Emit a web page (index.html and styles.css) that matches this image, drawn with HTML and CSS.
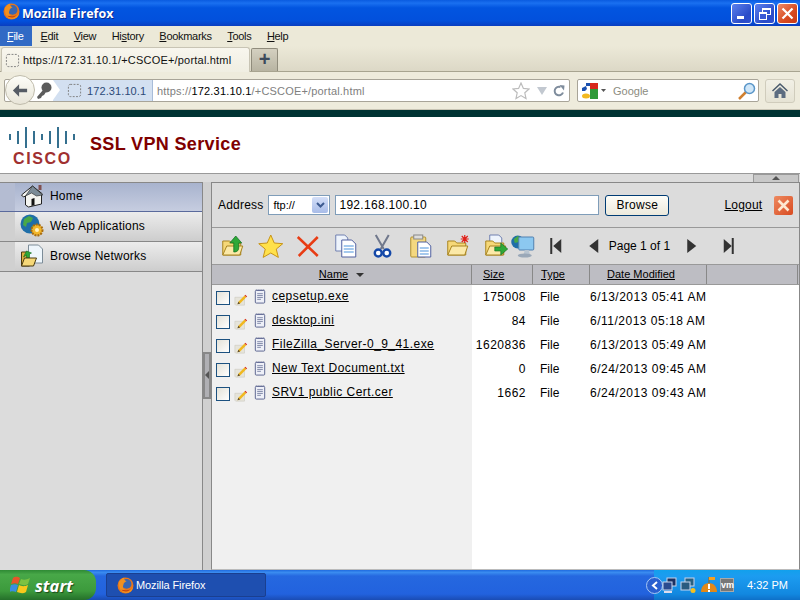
FILE: index.html
```html
<!DOCTYPE html>
<html lang="en">
<head>
    <meta charset="UTF-8">
    <title>Mozilla Firefox</title>
    <link rel="stylesheet" href="styles.css">
</head>
<body>
    <svg class="defs" width="0" height="0">
        <symbol id="fox" viewBox="0 0 16 16">
            <circle cx="8" cy="8" r="7.5" fill="#e8761a"/>
            <circle cx="9" cy="6.5" r="4.6" fill="#3a66b0"/>
            <path d="M2 4c-1 5 1 11 7 11 4 0 6-3 6-6-1 3-3 4-6 3.500-3-.5-4-3-3-5 0-2 2-3 3-3.500C7 3 6 2 7 .5 5 1 3.500 2 3 3.500z" fill="#f09020"/>
            <path d="M4 12c2 2 6 2.500 9-.5-3 1.500-6 1-9 .5z" fill="#c8420c"/>
        </symbol>
        <symbol id="dashed" viewBox="0 0 16 16">
            <rect x="1.500" y="1.500" width="13" height="13" rx="2" fill="none" stroke="#7c7c7c" stroke-dasharray="2 1.500"/>
        </symbol>
        <symbol id="edit" viewBox="0 0 16 16">
            <path d="M1 6h9l2 1v8H2l-1-1z" fill="#e6e4da" stroke="#c8c6bc" stroke-width=".6"/>
            <path d="M5 11l7-7 2 2-7 7-3 1z" fill="#f0b820"/>
            <path d="M12 4l1-1 2 2-1 1z" fill="#d83020"/>
            <path d="M4 14l1-3 2 2z" fill="#5a4a30"/>
        </symbol>
        <symbol id="note" viewBox="0 0 12 16">
            <rect x="1" y="1.500" width="10" height="13.500" rx="1" fill="#eef0f8" stroke="#56608c"/>
            <path d="M1.500 1h9" stroke="#56608c" stroke-dasharray="1 1"/>
            <path d="M3 5h6M3 7h6M3 9h6M3 11h4" stroke="#7c84a4"/>
        </symbol>
        <symbol id="folder" viewBox="0 0 24 24">
            <path d="M2 7h7l2 2h9v12H2z" fill="#f6d878" stroke="#a88420"/>
            <path d="M2 21l4-9h16l-3 9z" fill="#fbe9a8" stroke="#a88420"/>
        </symbol>
    </svg>

    <div class="titlebar">
        <svg class="title-icon"><use href="#fox"/></svg>
        <span class="title-text">Mozilla Firefox</span>
        <div class="win-buttons">
            <div class="win-btn"><span class="min-glyph"></span></div>
            <div class="win-btn"><span class="max-back"></span><span class="max-front"></span></div>
            <div class="win-btn win-close">
                <svg width="13" height="13" viewBox="0 0 13 13"><path d="M1.500 1.500l10 10M11.500 1.500l-10 10" stroke="#fff" stroke-width="2.200"/></svg>
            </div>
        </div>
    </div>

    <div class="menubar">
        <span class="menu-item active"><u>F</u>ile</span>
        <span class="menu-item"><u>E</u>dit</span>
        <span class="menu-item"><u>V</u>iew</span>
        <span class="menu-item">Hi<u>s</u>tory</span>
        <span class="menu-item"><u>B</u>ookmarks</span>
        <span class="menu-item"><u>T</u>ools</span>
        <span class="menu-item"><u>H</u>elp</span>
    </div>

    <div class="tabbar">
        <div class="tab">
            <svg class="tab-icon"><use href="#dashed"/></svg>
            <span>https://172.31.10.1/+CSCOE+/portal.html</span>
        </div>
        <div class="new-tab">+</div>
    </div>

    <div class="navbar">
        <div class="back-btn">
            <svg width="16" height="15" viewBox="0 0 18 16"><path d="M8 1L1 8l7 7V10h9V6H8z" fill="#555b64"/></svg>
        </div>
        <div class="urlbar">
            <svg class="key" width="16" height="18" viewBox="0 0 16 18"><circle cx="10.500" cy="5.500" r="5" fill="#5c5c5c"/><path d="M7 8L1 15l1 2 3-1 1-2 2-1 2-3z" fill="#5c5c5c"/></svg>
            <div class="identity">
                <svg class="tab-icon"><use href="#dashed"/></svg>
                <span>172.31.10.1</span>
            </div>
            <div class="url-text">https://<b>172.31.10.1</b>/+CSCOE+/portal.html</div>
            <svg class="star" width="18" height="18" viewBox="0 0 18 18"><path d="M9 1l2.400 5.400 5.600.6-4.200 3.800 1.200 5.700L9 13.600l-5 2.900 1.200-5.700L1 7l5.600-.6z" fill="#fff" stroke="#bcbcbc" stroke-width="1.200"/></svg>
            <svg class="drop" width="10" height="8" viewBox="0 0 10 8"><path d="M0 0h10L5 8z" fill="#c2c8d0"/></svg>
            <svg class="reload" width="12" height="12" viewBox="0 0 12 12"><path d="M10 7.500A4.300 4.300 0 1 1 7.500 2" fill="none" stroke="#7e8c9c" stroke-width="2"/><path d="M6.500 0l5 .5-.5 5z" fill="#7e8c9c"/></svg>
        </div>
        <div class="searchbar">
            <svg class="g-icon" width="16" height="16" viewBox="0 0 16 16">
                <rect x="8" y="0" width="8" height="6" fill="#d8281c"/>
                <rect x="8" y="6" width="8" height="10" fill="#2f9a38"/>
                <path d="M0 5l4-2 1 3-2 2H0z" fill="#1a50b0"/>
                <rect x="4" y="0" width="4" height="3" fill="#1a50b0"/>
                <ellipse cx="4" cy="13" rx="4" ry="2.500" fill="#f2b820"/>
            </svg>
            <svg class="drop-small" width="5" height="3" viewBox="0 0 5 3"><path d="M0 0h5L2.500 3z" fill="#555"/></svg>
            <span class="search-text">Google</span>
            <svg class="lens" width="18" height="18" viewBox="0 0 18 18"><path d="M8 10l-7 7" stroke="#d08030" stroke-width="2.500"/><circle cx="11.500" cy="6.500" r="5" fill="#cfe6f8" stroke="#5a96c8" stroke-width="1.500"/></svg>
        </div>
        <div class="home-btn">
            <svg width="16" height="15" viewBox="0 0 16 15"><path d="M8 0L0 7.500l1 1L8 2l7 6.500 1-1z" fill="#4a5a6c"/><path d="M2.500 9L8 4l5.500 5v6h-4v-4h-3v4h-4z" fill="#5c6c80"/></svg>
        </div>
    </div>
    <div class="dark-strip"></div>

    <div class="site-header">
        <div class="cisco-logo">
            <div class="cisco-bars">
                <i class="b1"></i><i class="b2"></i><i class="b3"></i><i class="b2"></i><i class="b1"></i><i class="b2"></i><i class="b3"></i><i class="b2"></i><i class="b1"></i>
            </div>
            <div class="cisco-name">CISCO</div>
        </div>
        <h1>SSL VPN Service</h1>
    </div>

    <div class="portal">
        <div class="collapse-strip"><div class="collapse-tab"></div></div>
        <div class="portal-body">
            <div class="sidebar">
                <div class="nav-item selected">
                    <svg width="25" height="24" viewBox="0 0 24 24"><path d="M12 2L1 11l2 2 2-1v9l3 2 13-3v-9l1-1z" fill="#f4f4f0" stroke="#222" stroke-width="1"/><path d="M12 2l10 9-6 1-5-3-6 3z" fill="#7c8c98" stroke="#222" stroke-width=".6"/><path d="M11 22v-7l3-1v7z" fill="#111"/><rect x="18" y="1" width="3" height="5" fill="#805050"/></svg>
                    <span>Home</span>
                </div>
                <div class="nav-item">
                    <svg width="25" height="24" viewBox="0 0 25 24"><circle cx="10" cy="10" r="9.500" fill="#1f6ea8"/><path d="M4 5l5-3 4 2-2 4-4 1-1 4-3-2zM12 12l5-1 1 4-4 4-2-3z" fill="#48a848"/><circle cx="17" cy="16" r="5.500" fill="#f2b62a" stroke="#a86c10" stroke-width="2" stroke-dasharray="2 1"/><circle cx="17" cy="16" r="2" fill="#fff2c0"/></svg>
                    <span>Web Applications</span>
                </div>
                <div class="nav-item">
                    <svg width="25" height="24" viewBox="0 0 24 24"><path d="M1 8h6l2 2v12H1z" fill="#e0b040" stroke="#4a3a10"/><path d="M8 1h10l4 4v14H8z" fill="#eef6fc" stroke="#7c8c98"/><path d="M3 13l3-6 5 2-2 1v4H6v-3z" fill="#2ea838" stroke="#0f6a1c" stroke-width=".6"/><path d="M1 22l3-8h12l-3 8z" fill="#f6d878" stroke="#4a3a10"/></svg>
                    <span>Browse Networks</span>
                </div>
            </div>
            <div class="splitter"><div class="split-handle"></div></div>
            <div class="main">
                <div class="address-row">
                    <label>Address</label>
                    <div class="proto">
                        <span>ftp://</span>
                        <div class="proto-arrow"><svg width="9" height="6" viewBox="0 0 9 6"><path d="M1 1l3.500 3.500L8 1" fill="none" stroke="#3c5a90" stroke-width="2"/></svg></div>
                    </div>
                    <div class="addr-input">192.168.100.10</div>
                    <div class="browse-btn">Browse</div>
                    <a class="logout">Logout</a>
                    <div class="logout-x"><svg width="13" height="13" viewBox="0 0 13 13"><path d="M1.500 1.500l10 10M11.500 1.500l-10 10" stroke="#fde8d0" stroke-width="2.600"/></svg></div>
                </div>
                <div class="toolbar">
                    <svg class="tool" height="24" viewBox="0 0 24 24"><use href="#folder"/><path d="M13 18V9H9l6-7 6 7h-3v4c0 3-1 5-5 5z" fill="#2ea838" stroke="#0f6a1c" stroke-width=".7"/></svg>
                    <svg class="tool" height="24" viewBox="0 0 26 24"><path d="M13 1l3.500 8 8.500.7-6.500 5.400 2.100 8.300L13 19l-7.600 4.400 2.100-8.300L1 9.700 9.500 9z" fill="#ffe14a" stroke="#c89418"/></svg>
                    <svg class="tool" height="24" viewBox="0 0 24 24"><path d="M2 3l20 19M22 3L3 22" stroke="#e83c14" stroke-width="2.500"/></svg>
                    <svg class="tool" height="24" viewBox="0 0 22 24"><path d="M1 1h9l3 3v13H1z" fill="#eef4fc" stroke="#7080b0"/><path d="M7 6h10l4 4v13H7z" fill="#fff" stroke="#5060a0"/><path d="M9 12h10M9 15h10M9 18h10" stroke="#88b8e8" stroke-width="1.500"/></svg>
                    <svg class="tool" height="24" viewBox="0 0 18 24"><path d="M2 1l8 14M15 1L7 15" stroke="#70788c" stroke-width="2"/><circle cx="4.500" cy="19" r="3.500" fill="#fff" stroke="#1448a8" stroke-width="2.400"/><circle cx="13" cy="19" r="3.500" fill="#fff" stroke="#1448a8" stroke-width="2.400"/></svg>
                    <svg class="tool" height="24" viewBox="0 0 22 24"><rect x="1" y="3" width="15" height="20" rx="1" fill="#f4d880" stroke="#b09030"/><rect x="4" y="1" width="9" height="4" fill="#ddd" stroke="#888"/><path d="M8 8h9l4 4v11H8z" fill="#fff" stroke="#5060a0"/><path d="M10 14h9M10 17h9M10 20h9" stroke="#88b8e8" stroke-width="1.500"/></svg>
                    <svg class="tool" height="24" viewBox="0 0 24 24"><use href="#folder"/><path d="M19 1v8M15 5h8M16 2l6 6M22 2l-6 6" stroke="#e02018" stroke-width="1.200"/></svg>
                    <svg class="tool" height="24" viewBox="0 0 24 24"><path d="M6 1h9l3 3v8H6z" fill="#eef4fc" stroke="#7080b0"/><use href="#folder"/><path d="M11 13h6V9l7 6-7 6v-4h-6z" fill="#2ea838" stroke="#0f6a1c" stroke-width=".6"/></svg>
                    <svg class="tool tool-net" height="24" viewBox="0 0 24 24"><circle cx="7" cy="8" r="6.500" fill="#1f6ea8"/><path d="M3 5l4-3 3 2-2 4-4 1zM7 11l4-1v3H8z" fill="#48a848"/><rect x="8" y="3" width="15" height="13" rx="1" fill="#8cc8f0" stroke="#5080b0"/><path d="M14 16h4l1 4h-6z" fill="#b8c4d0"/><ellipse cx="14" cy="21.500" rx="7" ry="2" fill="#9aa8b8"/></svg>
                    <svg class="tool tool-first" height="16" viewBox="0 0 11 16"><rect width="2" height="16" fill="#333"/><path d="M11 1L3 8l8 7z" fill="#333"/></svg>
                    <svg class="tool" height="14" viewBox="0 0 9 14"><path d="M9 0L0 7l9 7z" fill="#333"/></svg>
                    <span class="page-text">Page 1 of 1</span>
                    <svg class="tool tool-next" height="14" viewBox="0 0 9 14"><path d="M0 0l9 7-9 7z" fill="#333"/></svg>
                    <svg class="tool" height="16" viewBox="0 0 10 16"><path d="M0 1l8 7-8 7z" fill="#333"/><rect x="8" width="2" height="16" fill="#333"/></svg>
                </div>
                <div class="list-head">
                    <div class="col-name"><u>Name</u><i class="sort-arrow"></i></div>
                    <div class="col-size"><u>Size</u></div>
                    <div class="col-type"><u>Type</u></div>
                    <div class="col-date"><u>Date Modified</u></div>
                    <div class="col-rest"></div>
                </div>
                <div class="list-body">
                    <div class="file-row">
                        <div class="file-name"><i class="check"></i><svg class="edit"><use href="#edit"/></svg><svg class="note"><use href="#note"/></svg><u>cepsetup.exe</u></div>
                        <div class="file-size">175008</div><div class="file-type">File</div><div class="file-date">6/13/2013 05:41 AM</div>
                    </div>
                    <div class="file-row">
                        <div class="file-name"><i class="check"></i><svg class="edit"><use href="#edit"/></svg><svg class="note"><use href="#note"/></svg><u>desktop.ini</u></div>
                        <div class="file-size">84</div><div class="file-type">File</div><div class="file-date">6/11/2013 05:18 AM</div>
                    </div>
                    <div class="file-row">
                        <div class="file-name"><i class="check"></i><svg class="edit"><use href="#edit"/></svg><svg class="note"><use href="#note"/></svg><u>FileZilla_Server-0_9_41.exe</u></div>
                        <div class="file-size">1620836</div><div class="file-type">File</div><div class="file-date">6/13/2013 05:49 AM</div>
                    </div>
                    <div class="file-row">
                        <div class="file-name"><i class="check"></i><svg class="edit"><use href="#edit"/></svg><svg class="note"><use href="#note"/></svg><u>New Text Document.txt</u></div>
                        <div class="file-size">0</div><div class="file-type">File</div><div class="file-date">6/24/2013 09:45 AM</div>
                    </div>
                    <div class="file-row">
                        <div class="file-name"><i class="check"></i><svg class="edit"><use href="#edit"/></svg><svg class="note"><use href="#note"/></svg><u>SRV1 public Cert.cer</u></div>
                        <div class="file-size">1662</div><div class="file-type">File</div><div class="file-date">6/24/2013 09:43 AM</div>
                    </div>
                </div>
            </div>
        </div>
    </div>

    <div class="taskbar">
        <div class="start">
            <svg width="22" height="20" viewBox="0 0 22 20">
                <path d="M3 3c3-2 5-1 7 0l-2 6C6 8 4 8 1 9z" fill="#e8552a"/>
                <path d="M11 4c3 1 5 1 9-1l-2 6c-3 2-6 1-9 0z" fill="#7cc242"/>
                <path d="M1 10c3-1 5-1 7 0l-2 7c-2-1-4-1-7 0z" fill="#3a8ee0"/>
                <path d="M9 10c2 1 5 2 9 0l-2 7c-3 2-6 1-9 0z" fill="#f8c81c"/>
            </svg>
            <span>start</span>
        </div>
        <div class="task-btn">
            <svg class="task-icon"><use href="#fox"/></svg>
            <span>Mozilla Firefox</span>
        </div>
        <div class="tray">
            <div class="tray-chevron"><svg width="8" height="9" viewBox="0 0 8 9"><path d="M6 1L2 4.500 6 8" fill="none" stroke="#fff" stroke-width="2"/></svg></div>
            <svg class="tray-icon" width="15" height="16" viewBox="0 0 15 16"><rect x="5" y="1" width="9" height="8" fill="#1c3060" stroke="#c8d4ec"/><rect x="1" y="5" width="9" height="8" fill="#2a4a90" stroke="#c8d4ec"/><path d="M2 14h8v2H2z" fill="#dde"/></svg>
            <svg class="tray-icon" width="16" height="16" viewBox="0 0 16 16"><rect x="5" y="1" width="9" height="8" fill="#2a6080" stroke="#c8d4ec"/><rect x="1" y="5" width="9" height="8" fill="#2a5a80" stroke="#c8d4ec"/><circle cx="13" cy="13.500" r="2.500" fill="#f4c020"/></svg>
            <svg class="tray-icon tray-alert" width="16" height="16" viewBox="0 0 16 16"><path d="M0 15c0-5 3-9 8-9s8 4 8 9z" fill="#e08818"/><path d="M8 0v6" stroke="#a85c08"/><path d="M8 0h6v3H8z" fill="#f4a020"/><rect x="7" y="7" width="2" height="5" fill="#fff"/><rect x="7" y="13" width="2" height="2" fill="#fff"/></svg>
            <div class="vm-icon">vm</div>
            <span class="clock">4:32 PM</span>
        </div>
    </div>
</body>
</html>
```

FILE: styles.css
```css
* {
    box-sizing: border-box;
}
html, body {
    width: 800px;
    height: 600px;
    margin: 0;
    overflow: hidden;
}
body {
    display: flex;
    flex-direction: column;
    font-family: "Liberation Sans", Arial, sans-serif;
    font-size: 12px;
    color: #000;
    background: #dcdcdc;
}
.defs {
    position: absolute;
}

/* window chrome */
.titlebar {
    height: 26px;
    display: flex;
    align-items: center;
    padding-left: 3px;
    background: linear-gradient(#0a5be0 0%, #1a70f0 12%, #0255e0 30%, #0250dc 80%, #0a3ec0 100%);
}
.title-icon {
    width: 17px;
    height: 17px;
    margin-right: 2px;
    margin-top: -3px;
}
.title-text {
    color: #fff;
    font-family: "Open Sans", sans-serif;
    font-weight: 700;
    font-size: 12.500px;
    text-shadow: 1px 1px 0 #0a2a90;
}
.win-buttons {
    display: flex;
    gap: 2px;
    margin-left: auto;
    margin-right: 2px;
}
.win-btn {
    width: 21px;
    height: 21px;
    border: 1px solid #fff;
    border-radius: 3px;
    background: linear-gradient(135deg, #5c80ee, #2a4cc8 70%, #3050d0);
    position: relative;
    display: flex;
    align-items: center;
    justify-content: center;
}
.win-close {
    background: linear-gradient(135deg, #ec8a68, #d84a20 60%, #c83a18);
}
.min-glyph {
    position: absolute;
    left: 5px;
    bottom: 4px;
    width: 7px;
    height: 3px;
    background: #fff;
}
.max-back, .max-front {
    position: absolute;
    border: 1px solid #fff;
    border-top-width: 2px;
}
.max-back {
    left: 7px;
    top: 4px;
    width: 9px;
    height: 7px;
}
.max-front {
    left: 4px;
    top: 8px;
    width: 8px;
    height: 8px;
    background: #3a5ad6;
}
.menubar {
    height: 20px;
    display: flex;
    background: #ece9d8;
}
.menu-item {
    font-size: 11px;
    line-height: 20px;
    letter-spacing: -.3px;
    padding: 0 7px;
    margin-right: 1.500px;
    color: #111;
}
.menu-item.active {
    background: #316ac5;
    color: #fff;
    width: 32px;
}
.tabbar {
    height: 26px;
    display: flex;
    align-items: flex-end;
    padding-left: 1px;
    background: linear-gradient(#ece9d8, #dcd8c6);
    border-bottom: 1px solid #a8a490;
}
.tab {
    width: 249px;
    height: 25px;
    margin-bottom: -1px;
    display: flex;
    align-items: center;
    padding-left: 3px;
    background: linear-gradient(#f8f6ee, #f0eee2);
    border: 1px solid #c8c4b4;
    border-bottom: 0;
    border-radius: 3px 3px 0 0;
    font-size: 11px;
    letter-spacing: .2px;
    color: #111;
}
.tab-icon {
    width: 15px;
    height: 15px;
    margin-right: 3px;
    flex: none;
}
.new-tab {
    width: 27px;
    height: 23px;
    margin-left: 1px;
    background: linear-gradient(#d4d0c0, #b8b4a2);
    border: 1px solid #908c7c;
    border-bottom: 0;
    border-radius: 2px 2px 0 0;
    color: #3c4a5c;
    font-size: 20px;
    font-weight: 700;
    line-height: 20px;
    text-align: center;
}
.navbar {
    height: 37px;
    display: flex;
    align-items: center;
    padding: 0 5px 0 4px;
    background: #eeebdc;
    position: relative;
}
.back-btn {
    position: absolute;
    left: 5px;
    top: 3px;
    width: 30px;
    height: 30px;
    border-radius: 50%;
    background: linear-gradient(#fdfdf8, #e8e5d8);
    border: 1px solid #c0bcac;
    display: flex;
    align-items: center;
    justify-content: center;
    z-index: 1;
}
.urlbar {
    width: 566px;
    height: 23px;
    display: flex;
    align-items: center;
    background: #fff;
    border: 1px solid #a8a498;
    border-radius: 2px;
    padding-left: 31px;
}
.key {
    flex: none;
    margin-right: 1px;
}
.identity {
    height: 21px;
    width: 100px;
    display: flex;
    align-items: center;
    padding-left: 14px;
    background: #d3e0f1;
    border-right: 1px solid #a8bcd8;
    color: #2c4a78;
    font-size: 11px;
    letter-spacing: .1px;
    position: relative;
}
.identity::before {
    content: "";
    position: absolute;
    left: 0;
    top: 0;
    border: 10.500px solid transparent;
    border-left: 7px solid #fff;
    border-right: 0;
}
.identity .tab-icon {
    margin-right: 5px;
}
.url-text {
    flex: 1;
    padding-left: 4px;
    font-size: 11px;
    letter-spacing: .18px;
    color: #808080;
}
.url-text b {
    font-weight: 400;
    color: #000;
}
.star, .drop, .reload {
    flex: none;
}
.drop {
    margin: 0 6px 0 7px;
}
.reload {
    margin-right: 4px;
}
.searchbar {
    width: 182px;
    height: 23px;
    margin-left: 7px;
    display: flex;
    align-items: center;
    background: #fff;
    border: 1px solid #a8a498;
    border-radius: 2px;
    padding: 0 2px 0 4px;
}
.drop-small {
    margin: 0 7px 0 3px;
}
.search-text {
    flex: 1;
    color: #8c8c80;
    font-size: 11px;
}
.home-btn {
    width: 30px;
    height: 24px;
    margin-left: 6px;
    display: flex;
    align-items: center;
    justify-content: center;
    background: linear-gradient(#f2f0e6, #e6e3d4);
    border: 1px solid #d0ccbc;
    border-radius: 3px;
}
.dark-strip {
    height: 8px;
    background: #003333;
    border-top: 1px solid #c8c4b4;
}

/* portal header */
.site-header {
    height: 57px;
    display: flex;
    background: #fff;
    padding-top: 9px;
    border-bottom: 1px solid #999;
}
.cisco-logo {
    width: 90px;
    padding-left: 9px;
}
.cisco-bars {
    height: 22px;
    display: flex;
    align-items: center;
    gap: 6px;
}
.cisco-bars i {
    width: 2px;
    background: #35708f;
}
.cisco-bars .b1 { height: 6px; }
.cisco-bars .b2 { height: 13px; }
.cisco-bars .b3 { height: 21px; }
.cisco-name {
    margin: 3px 0 0 4px;
    color: #a03030;
    font-weight: 700;
    font-size: 16px;
    line-height: 15px;
    letter-spacing: 1.600px;
}
.site-header h1 {
    margin: 8px 0 0 0;
    color: #800000;
    font-size: 18px;
    line-height: 21px;
    letter-spacing: .35px;
}

/* portal body */
.portal {
    height: 396px;
    display: flex;
    flex-direction: column;
    background: #dcdcdc;
}
.collapse-strip {
    height: 8px;
    display: flex;
    justify-content: flex-end;
    padding-right: 1px;
}
.collapse-tab {
    width: 46px;
    height: 8px;
    background: #c8c8c8;
    border: 1px solid #999;
    border-bottom: 0;
    position: relative;
}
.collapse-tab::after {
    content: "";
    position: absolute;
    left: 18px;
    top: 1px;
    border: 4px solid transparent;
    border-top: 0;
    border-bottom-color: #555;
}
.portal-body {
    flex: 1;
    display: flex;
    min-height: 0;
}
.sidebar {
    width: 203px;
    border-right: 1px solid #888;
}
.nav-item {
    height: 30px;
    display: flex;
    align-items: center;
    padding: 0 0 2px 20px;
    gap: 5px;
    font-size: 12px;
    letter-spacing: .2px;
    background: linear-gradient(to right, #d0d0d0 15px, transparent 15px), linear-gradient(#ececec, #cdcdcd);
    border-bottom: 1px solid #888;
}
.nav-item.selected {
    background: linear-gradient(to right, #b4bcd2 15px, transparent 15px), linear-gradient(#a8b3ce, #c6cde0);
    border-top: 1px solid #888;
    border-bottom-color: #5a6a9c;
}
.nav-item svg {
    flex: none;
}
.splitter {
    width: 8px;
    background: #d0d0d0;
}
.split-handle {
    width: 8px;
    height: 47px;
    margin-top: 170px;
    background: #b0b0b4;
    border: 2px solid #888;
    position: relative;
}
.split-handle::after {
    content: "";
    position: absolute;
    left: 0;
    top: 17px;
    border: 4px solid transparent;
    border-left: 0;
    border-right-color: #555;
}
.main {
    width: 589px;
    display: flex;
    flex-direction: column;
    border: 1px solid #888;
    border-bottom: 1px solid #bbb;
}
.address-row {
    height: 45px;
    display: flex;
    align-items: center;
    padding-left: 6px;
    border-bottom: 1px solid #999;
}
.address-row label {
    margin-right: 5px;
    letter-spacing: .2px;
}
.proto {
    width: 62px;
    height: 20px;
    display: flex;
    align-items: center;
    padding-left: 4px;
    background: #fff;
    border: 1px solid #7f9db9;
    font-size: 11px;
}
.proto span {
    flex: 1;
}
.proto-arrow {
    width: 16px;
    height: 16px;
    margin-right: 1px;
    display: flex;
    align-items: center;
    justify-content: center;
    background: linear-gradient(#d4dff8, #a8bce8);
    border-radius: 2px;
}
.addr-input {
    width: 264px;
    height: 20px;
    margin-left: 5px;
    padding-left: 3px;
    background: #fff;
    border: 1px solid #7f9db9;
    line-height: 18px;
    letter-spacing: .3px;
}
.browse-btn {
    width: 64px;
    height: 21px;
    margin-left: 6px;
    background: linear-gradient(#fdfdf8, #ece9dc);
    border: 1px solid #003c74;
    border-radius: 3px;
    line-height: 19px;
    text-align: center;
    letter-spacing: .3px;
}
.logout {
    margin-left: 55px;
    text-decoration: underline;
    letter-spacing: .2px;
}
.logout-x {
    width: 19px;
    height: 19px;
    margin-left: 12px;
    display: flex;
    align-items: center;
    justify-content: center;
    background: linear-gradient(135deg, #ee8a60, #d84a20);
    border-radius: 2px;
}
.toolbar {
    height: 36px;
    display: flex;
    align-items: center;
    padding-left: 2px;
}
.tool {
    width: 37.500px;
    flex: none;
}
.tool-net {
    margin-left: -10px;
}
.tool-first {
    margin-left: -4.500px;
}
.page-text {
    margin-left: -3.250px;
    width: 62px;
    white-space: nowrap;
}
.tool-next {
    margin-left: 1.750px;
}
.list-head {
    height: 21px;
    display: flex;
    background: #bdbdc3;
    border-top: 1px solid #999;
    border-bottom: 1px solid #999;
    font-size: 11px;
    line-height: 19px;
    text-align: center;
}
.list-head > div {
    border-right: 1px solid #888;
}
.col-name {
    width: 260px;
}
.col-size {
    width: 61px;
    text-align: left;
    padding-left: 11px;
}
.col-type {
    width: 57px;
    padding-right: 16px;
}
.col-date {
    width: 117px;
    padding-right: 14px;
}
.col-rest {
    flex: 1;
    margin-right: 1px;
    border-right: 1px solid #888;
}
.sort-arrow {
    display: inline-block;
    margin-left: 8px;
    vertical-align: 1px;
    border: 4px solid transparent;
    border-bottom: 0;
    border-top-color: #333;
}
.list-body {
    flex: 1;
    background: linear-gradient(to right, #f0f0f0 260px, #fff 260px);
}
.file-row {
    height: 24px;
    display: flex;
    align-items: center;
}
.file-name {
    width: 260px;
    display: flex;
    align-items: center;
    padding-left: 4px;
    letter-spacing: .45px;
}
.file-name u {
    margin-top: -2px;
    margin-left: 6px;
}
.check {
    width: 14px;
    height: 14px;
    flex: none;
    background: linear-gradient(135deg, #e4e2d8, #fff);
    border: 1px solid #1c5180;
    margin-top: 1px;
}
.edit {
    width: 14px;
    height: 14px;
    margin: 3px 0 0 4px;
    flex: none;
}
.note {
    width: 12px;
    height: 15px;
    margin: -2px 0 0 6px;
    flex: none;
}
.file-size {
    width: 54px;
    text-align: right;
    letter-spacing: .5px;
}
.file-type {
    width: 64px;
    padding-left: 14px;
}
.file-date {
    flex: 1;
    letter-spacing: .5px;
}

/* xp taskbar */
.taskbar {
    flex: 1;
    display: flex;
    align-items: center;
    background: linear-gradient(#1f6be0 0%, #3a8cf0 8%, #2568e0 20%, #2262de 80%, #1a4cb4 100%);
    position: relative;
}
.start {
    width: 96px;
    height: 30px;
    display: flex;
    align-items: center;
    padding-left: 10px;
    gap: 3px;
    background: linear-gradient(#2f8a34, #48a848 15%, #3c9a3c 70%, #256f2a);
    border-radius: 0 12px 12px 0;
    color: #fff;
    font-family: "Open Sans", sans-serif;
    font-style: italic;
    font-weight: 700;
    font-size: 16.500px;
    text-shadow: 1px 1px 1px #1a4a1a;
}
.task-btn {
    width: 160px;
    height: 24px;
    margin-left: 10px;
    display: flex;
    align-items: center;
    padding-left: 10px;
    gap: 2px;
    background: #1e4fb0;
    border: 1px solid #1a3f90;
    border-radius: 2px;
    color: #fff;
    font-size: 11px;
    letter-spacing: -.1px;
}
.task-icon {
    width: 17px;
    height: 17px;
}
.tray {
    margin-left: auto;
    width: 146px;
    height: 30px;
    display: flex;
    align-items: center;
    gap: 3px;
    background: linear-gradient(#12a0ec, #1c9cf0 20%, #1288e0 80%, #0e70c8);
    position: relative;
}
.tray-chevron {
    width: 17px;
    height: 17px;
    margin-left: -8px;
    margin-right: -4px;
    border-radius: 50%;
    background: #2a60d0;
    border: 1px solid #a8c8f4;
    display: flex;
    align-items: center;
    justify-content: center;
}
.tray-icon {
    flex: none;
}
.tray-alert {
    margin-left: 2px;
}
.vm-icon {
    width: 14px;
    height: 14px;
    background: #777;
    color: #fff;
    font-size: 9px;
    font-weight: 700;
    line-height: 13px;
    text-align: center;
    border: 1px solid #aaa;
}
.clock {
    margin-left: 10px;
    color: #fff;
    font-size: 11px;
}
```
